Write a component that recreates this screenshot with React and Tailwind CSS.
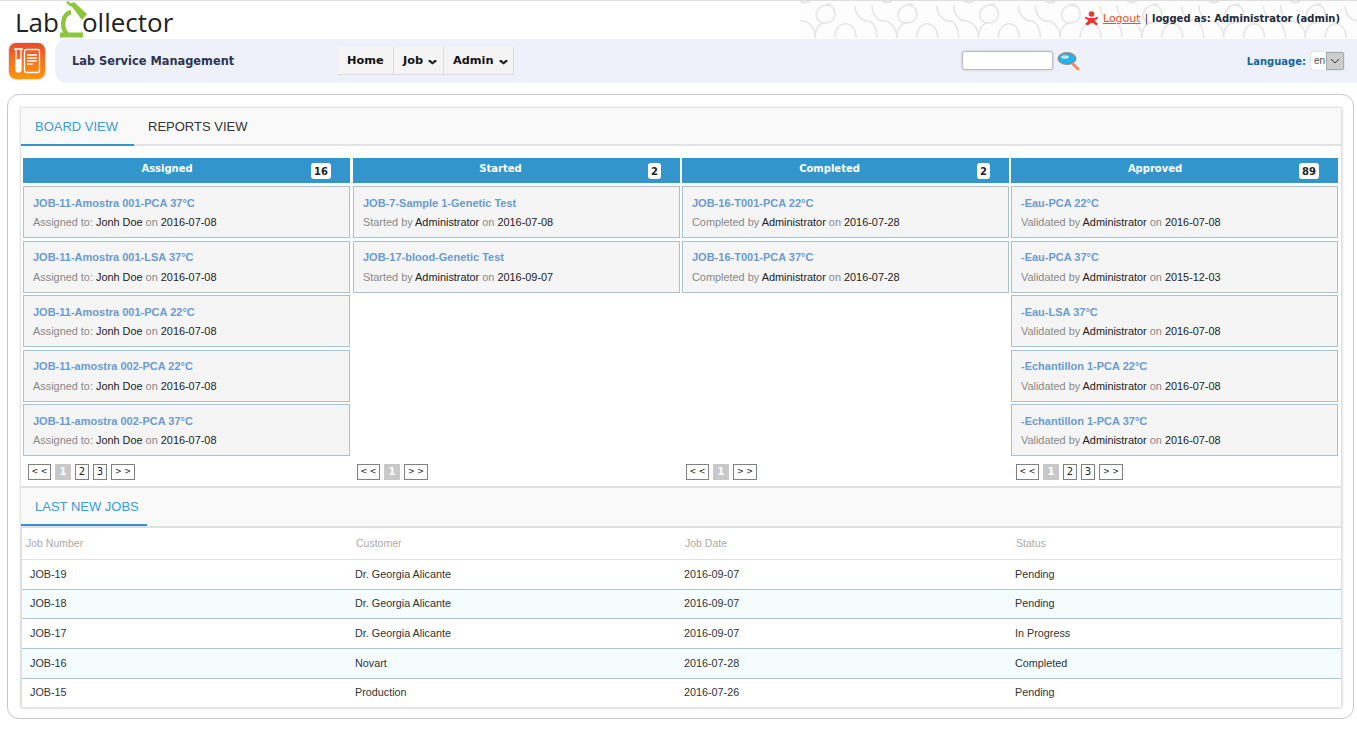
import React from "react";

const columns = [
  { title: "Assigned", count: 16, pages: [1, 2, 3], cards: [
    ["JOB-11-Amostra 001-PCA 37°C", "Assigned to:", "Jonh Doe", "2016-07-08"],
    ["JOB-11-Amostra 001-LSA 37°C", "Assigned to:", "Jonh Doe", "2016-07-08"],
    ["JOB-11-Amostra 001-PCA 22°C", "Assigned to:", "Jonh Doe", "2016-07-08"],
    ["JOB-11-amostra 002-PCA 22°C", "Assigned to:", "Jonh Doe", "2016-07-08"],
    ["JOB-11-amostra 002-PCA 37°C", "Assigned to:", "Jonh Doe", "2016-07-08"],
  ]},
  { title: "Started", count: 2, pages: [1], cards: [
    ["JOB-7-Sample 1-Genetic Test", "Started by", "Administrator", "2016-07-08"],
    ["JOB-17-blood-Genetic Test", "Started by", "Administrator", "2016-09-07"],
  ]},
  { title: "Completed", count: 2, pages: [1], cards: [
    ["JOB-16-T001-PCA 22°C", "Completed by", "Administrator", "2016-07-28"],
    ["JOB-16-T001-PCA 37°C", "Completed by", "Administrator", "2016-07-28"],
  ]},
  { title: "Approved", count: 89, pages: [1, 2, 3], cards: [
    ["-Eau-PCA 22°C", "Validated by", "Administrator", "2016-07-08"],
    ["-Eau-PCA 37°C", "Validated by", "Administrator", "2015-12-03"],
    ["-Eau-LSA 37°C", "Validated by", "Administrator", "2016-07-08"],
    ["-Echantillon 1-PCA 22°C", "Validated by", "Administrator", "2016-07-08"],
    ["-Echantillon 1-PCA 37°C", "Validated by", "Administrator", "2016-07-08"],
  ]},
];

const jobs = [
  ["JOB-19", "Dr. Georgia Alicante", "2016-09-07", "Pending"],
  ["JOB-18", "Dr. Georgia Alicante", "2016-09-07", "Pending"],
  ["JOB-17", "Dr. Georgia Alicante", "2016-09-07", "In Progress"],
  ["JOB-16", "Novart", "2016-07-28", "Completed"],
  ["JOB-15", "Production", "2016-07-26", "Pending"],
];

const verdana = "[font-family:DejaVu_Sans,sans-serif]";

function Chevron() {
  return (
    <svg width="9" height="6" viewBox="0 0 9 6" className="ml-[5px]">
      <path d="M0.5 1h2l2 2 2-2h2v1.4L4.5 5.5 0.5 2.4z" fill="#222" />
    </svg>
  );
}

function HeaderPattern() {
  return (
    <svg className="absolute left-[800px] top-0" width="557" height="37" aria-hidden="true">
      <rect width="557" height="37" fill="#fdfdfd" />
      {[-1, 0, 1, 2, 3, 4, 5, 6].map((i) => (
        <g key={i} transform={`translate(${i * 81.7} 0)`} fill="none" stroke="#e5e5e5" strokeWidth="1.5">
          <path d="M25 4C33 4 35 9 35 13C35 20 29 22 25 22C20 22 15 27 15 37" />
          <path d="M35 37C35 18 56 18 56 37" />
          <path d="M55 5C55 14 62 20 68 20C73 20 77 28 77 37" />
          <path d="M72 4C72 14 78 20 84 20C90 20 97 27 97 37" />
          <path d="M113 3C103 3 98 9 98 14C98 19 102 22 107 22" />
          <path d="M82 0q5 3 10 0" strokeWidth="2" />
        </g>
      ))}
    </svg>
  );
}

function Microscope() {
  return (
    <svg width="28" height="37" viewBox="0 0 28 37" className="mb-[1px] ml-[1px] mr-[-6px] shrink-0">
      <path d="M11 11C2 13 1 27 7 33" fill="none" stroke="#8cc63f" strokeWidth="4.500" />
      <path d="M0 31.500h23v5H0z" fill="#8cc63f" />
      <path d="M10 3l4-2 13 12-5 6z" fill="#8cc63f" />
      <path d="M6 1.500l2-1.500 5 4-2 2z" fill="#8cc63f" />
    </svg>
  );
}

function AppIcon() {
  return (
    <div className="mt-[3px] ml-2 h-[38px] w-[38px] shrink-0 rounded-[8px] border border-[#e8e8e8] bg-gradient-to-b from-[#ea4a2a] to-[#ff9500] flex items-center justify-center">
      <svg width="30" height="30" viewBox="0 0 30 30">
        <path d="M2 3h9M4 3.500v20a2.500 2.500 0 0 0 5 0v-20" fill="none" stroke="#fff" strokeWidth="1.3" />
        <path d="M4 13h5v11a2.500 2.500 0 0 1-5 0z" fill="#fff" />
        <rect x="12.500" y="3.500" width="15" height="23" rx="2" fill="none" stroke="#fff" strokeWidth="1.3" />
        <path d="M15 9h10M15 12h10M15 15h10M15 18h6" stroke="#fff" strokeWidth="1.3" />
      </svg>
    </div>
  );
}

function Pager({ pages }) {
  const box = `h-[16px] border border-[#808080] bg-white leading-[14px] text-center text-[#222] ${verdana}`;
  return (
    <div className={`flex gap-[4px] pt-[8px] h-[31px] ${pages.length === 1 ? "pl-[4px]" : "pl-[5px]"}`}>
      <div className={`${box} w-[23px] text-[8px]`}>&lt; &lt;</div>
      {pages.map((p) =>
        p === 1 ? (
          <div key={p} className={`h-[16px] w-[16px] border border-[#c8c8c8] bg-[#c8c8c8] text-[10px] font-bold leading-[14px] text-center text-white ${verdana}`}>1</div>
        ) : (
          <div key={p} className={`${box} w-[14px] text-[10px]`}>{p}</div>
        )
      )}
      <div className={`${box} w-[24px] text-[8px]`}>&gt; &gt;</div>
    </div>
  );
}

function Card({ card }) {
  return (
    <div className="h-[52px] border border-[#a9c1d7] bg-[#f5f5f5] pl-[9px] pt-[9.900px] text-[11px] leading-[13px]">
      <div className="font-bold text-[#6a9bd0]">{card[0]}</div>
      <div className="mt-[6.400px] text-[10.900px] text-[#888]">
        {card[1]} <span className="text-[#222]">{card[2]}</span> on <span className="text-[#222]">{card[3]}</span>
      </div>
    </div>
  );
}

function Column({ col }) {
  return (
    <div className="flex w-[327px] flex-col">
      <div className="flex h-[25px] items-start bg-[#3296cc] text-white">
        <span className={`${verdana} flex-1 text-center text-[10px] font-bold leading-[21px]`}>{col.title}</span>
        <span className={`${verdana} mr-[19px] mt-[5px] h-[16px] rounded-[3px] bg-white px-[3px] text-[10px] font-bold leading-[17px] text-[#222]`}>{col.count}</span>
      </div>
      <div className="mt-[3px] flex h-[270px] flex-col gap-[2.500px]">
        {col.cards.map((c) => <Card key={c[0]} card={c} />)}
      </div>
      <Pager pages={col.pages} />
    </div>
  );
}

export default function App() {
  return (
    <div className="relative h-[734px] w-[1357px] overflow-hidden bg-white [font-family:Liberation_Sans,Arial,sans-serif]">
      <header className="relative h-[39px] border-t border-[#dedede]">
        <HeaderPattern />
        <div className="relative flex h-[38px] items-end pl-[15px] [font-family:Open_Sans,sans-serif] text-[26px] leading-[34px] text-[#222]">
          <span>Lab</span>
          <Microscope />
          <span>ollector</span>
          <div className={`${verdana} absolute right-[17px] top-[10px] flex items-center text-[10px] leading-[14px] font-bold text-[#222a3a]`}>
            <svg width="13" height="15" viewBox="0 0 13 15" className="mr-[5px]">
              <circle cx="6.500" cy="3" r="2.800" fill="#e8392b" />
              <path d="M0.500 5.500l3 1.500h6l3-1.500 0.500 2-3 1.500v1l3 3-1.500 1.500-3.500-2.500h-2l-3.500 2.500L0 13l3-3V9L0 7.500z" fill="#e8392b" />
            </svg>
            <a className="text-[11px] font-normal text-[#e8541e] underline">Logout</a>
            <span className="ml-[4px] font-normal">|</span>
            <span className="ml-[4px]">logged as: Administrator (admin)</span>
          </div>
        </div>
      </header>

      <div className="flex h-[44px] items-start">
        <AppIcon />
        <div className="ml-[9px] flex h-[44px] flex-1 items-center rounded-l-[12px] bg-[#eef1fa]">
          <div className={`${verdana} ml-[17px] w-[266px] pt-[1px] text-[11.400px] font-bold text-[#2f3550]`}>Lab Service Management</div>
          <nav className={`${verdana} flex h-[28px] items-center border-r border-b border-[#ddd] bg-[#f4f4f4] text-[11.300px] font-bold text-[#111]`}>
            <div className="flex h-full w-[56px] items-center border-r border-[#ddd] pl-[9px] pt-[2px]">Home</div>
            <div className="flex h-full w-[50px] items-center border-r border-[#ddd] pl-[9px] pt-[2px]">Job<Chevron /></div>
            <div className="flex h-full w-[69px] items-center pl-[9px] pt-[2px]">Admin<Chevron /></div>
          </nav>
          <div className="ml-[449px] mt-[-1px] h-[17px] w-[89px] rounded-[2px] bg-white shadow-[0_0_2px_1px_#aaa]" />
          <svg width="24" height="20" viewBox="0 0 24 20" className="ml-[5px] mt-[-1px]">
            <ellipse cx="10" cy="7.500" rx="9.500" ry="6.500" fill="#8a8f92" />
            <ellipse cx="10" cy="8" rx="8" ry="5" fill="#22b4ea" />
            <ellipse cx="8" cy="6" rx="4" ry="1.800" fill="#b5ecff" />
            <path d="M16 13l5 5" stroke="#ef8a62" strokeWidth="2.800" strokeLinecap="round" />
          </svg>
          <div className={`${verdana} ml-auto text-[10px] font-bold text-[#14659c]`}>Language:</div>
          <div className="ml-[5px] mr-[13px] flex h-[18px] w-[33px] overflow-hidden rounded-[2px] bg-white shadow-[0_0_1px_#888]">
            <span className="w-[15px] shrink-0 pl-[3px] text-[10px] leading-[18px] text-[#555] whitespace-nowrap">en</span>
            <span className="flex flex-1 items-center justify-center border border-[#aaa] bg-[#ccc]">
              <svg width="10" height="6" viewBox="0 0 10 6"><path d="M1 1l4 4 4-4" fill="none" stroke="#333" /></svg>
            </span>
          </div>
        </div>
      </div>

      <main className="mx-[7px] mt-[11px] h-[625px] w-[1347px] rounded-[12px] border border-[#c8c8c8] pl-[12px] pt-[12px]">
        <div className="h-[600px] w-[1321px] border-l border-t border-[#e2e2e2] shadow-[1px_1px_3px_#ccc]">
          <div className="flex h-[38px] border-b-2 border-[#e2e2e2] bg-[#f9f9f9] text-[13px]">
            <div className="-mb-[2px] h-[38px] w-[113px] border-b-2 border-[#3296cc] pl-[14px] pt-[11px] leading-[16px] text-[#3b9bd6]">BOARD VIEW</div>
            <div className="pl-[14px] pt-[11px] leading-[16px] text-[#333]">REPORTS VIEW</div>
          </div>

          <div className="grid grid-cols-[330px_329px_329px_327px] pl-[2px] pt-[12px]">
            {columns.map((c) => <Column key={c.title} col={c} />)}
          </div>

          <div className="h-[42px] border-y-[2px] border-[#e0e0e0] bg-[#f9f9f9] -mt-[1px]">
            <div className="h-[38px] w-[126px] border-b-[2px] border-[#3296cc] pl-[14px] pt-[11px] text-[13px] leading-[16px] text-[#3b9bd6]">LAST NEW JOBS</div>
          </div>

          <div className="border-l border-[#e0e0e0] text-[10.800px]">
            <div className="grid h-[32px] grid-cols-[330px_329px_331px_1fr] items-center border-b-[1px] border-[#e0e0e0] pt-[1px] text-[10.500px] text-[#aaa]">
              <div className="pl-[4px]">Job Number</div>
              <div className="pl-[4px]">Customer</div>
              <div className="pl-[4px]">Job Date</div>
              <div className="pl-[4px]">Status</div>
            </div>
            {jobs.map((j, i) => (
              <div key={j[0]} className={`grid grid-cols-[330px_329px_331px_1fr] items-center text-[#333] ${i < 4 ? "h-[29.650px] pb-[1px] border-b border-[#a9c6dc]" : "h-[28.400px] pb-[1px]"} ${i % 2 === 1 ? "bg-[#f4fcfe]" : "bg-white"}`}>
                <div className="pl-[8px]">{j[0]}</div>
                <div className="pl-[3px]">{j[1]}</div>
                <div className="pl-[3px]">{j[2]}</div>
                <div className="pl-[3px]">{j[3]}</div>
              </div>
            ))}
          </div>
        </div>
      </main>
    </div>
  );
}
